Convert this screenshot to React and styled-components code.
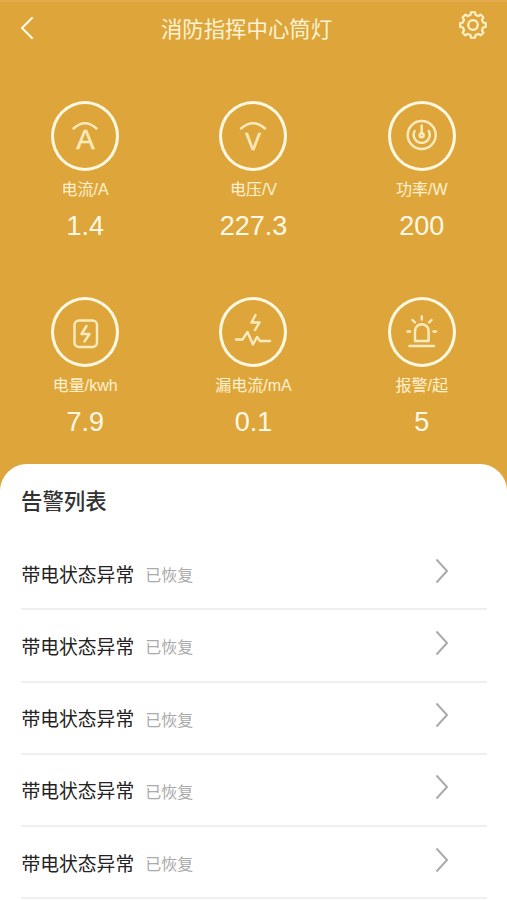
import React from 'react'
import styled, { createGlobalStyle } from 'styled-components';

const GlobalStyle = createGlobalStyle`
  * {
    box-sizing: border-box;
  }
  body {
    margin: 0;
    background: #fff;
    font-family: "Liberation Sans", "Noto Sans CJK SC", sans-serif;
  }
`;

const Page = styled.div`
  width: 100%;
  height: 900px;
  overflow: hidden;
  background: #dea63a;
  border-top: 2px solid #e3ab4c;
  display: flex;
  flex-direction: column;
`;

const Header = styled.header`
  height: 52px;
  padding: 0 19px 0 20px;
  display: flex;
  align-items: center;
  justify-content: space-between;
  flex-shrink: 0;
`;

const Title = styled.h1`
  margin: 3px 0 0;
  padding-right: 13px;
  font-size: 21.4px;
  font-weight: 400;
  line-height: 32px;
  color: #fff3d6;
`;

const BackIcon = styled.svg`
  width: 14px;
  height: 24px;
  margin-right: 14px;
`;

const GearIcon = styled.svg`
  width: 30px;
  height: 30px;
  margin-top: -6px;
`;

const Stats = styled.section`
  height: 410px;
  padding: 46.5px 1px 0;
  display: grid;
  grid-template-columns: repeat(3, 1fr);
  grid-auto-rows: 196px;
  flex-shrink: 0;
`;

const Stat = styled.div`
  display: flex;
  flex-direction: column;
  align-items: center;
`;

const Circle = styled.div`
  width: 68px;
  height: 70px;
  border: 3px solid #fff8e2;
  border-radius: 50%;
  display: flex;
  align-items: center;
  justify-content: center;
`;

const StatIcon = styled.svg`
  width: 40px;
  height: 40px;
  flex-shrink: 0;
  fill: none;
  stroke: #fcebbf;
  stroke-width: 2.4;
  stroke-linecap: round;
  stroke-linejoin: round;
  text {
    font-family: "Liberation Sans", sans-serif;
    fill: #fcebbf;
    stroke-width: 0.5;
    text-anchor: middle;
  }
`;

const StatLabel = styled.div`
  margin-top: 7.5px;
  font-size: 16px;
  line-height: 24px;
  color: #fff1d0;
`;

const StatValue = styled.div`
  margin-top: 8px;
  font-size: 27px;
  line-height: 32px;
  color: #fff8e6;
`;

const Panel = styled.main`
  flex: 1;
  padding: 22px 20px 0 21px;
  background: #fff;
  border-radius: 27px 27px 0 0;
`;

const PanelTitle = styled.h2`
  margin: 0 0 20px;
  font-size: 21.4px;
  font-weight: 500;
  line-height: 32px;
  color: #333;
`;

const Row = styled.div`
  height: 72.25px;
  padding: 5px 38px 0 0;
  border-bottom: 2px solid #efefef;
  display: flex;
  align-items: center;
`;

const RowName = styled.span`
  padding-left: 0.5px;
  font-size: 18.8px;
  line-height: 28px;
  color: #222;
`;

const RowStatus = styled.span`
  margin: 1px 0 0 11px;
  flex: 1;
  font-size: 16px;
  line-height: 24px;
  color: #aaa;
`;

const RowArrow = styled.svg`
  width: 14px;
  height: 26px;
  margin-top: -10px;
`;

// outline of an eight tooth gear around (15, 15)
const gearPath = () => {
  const points = [];
  for (let i = 0; i < 8; i++) {
    [[-14, 10.4], [-9, 12.9], [9, 12.9], [14, 10.4]].forEach(([offset, r]) => {
      const a = ((i * 45 + offset - 90) * Math.PI) / 180;
      points.push(`${(15 + r * Math.cos(a)).toFixed(2)} ${(15 + r * Math.sin(a)).toFixed(2)}`);
    });
  }
  return `M${points.join('L')}Z`;
};

const CurrentIcon = () => (
  <StatIcon viewBox="0 0 40 40">
    <path d="M8.5 12.5Q20 2 31.5 12.5" />
    <text x="20.3" y="32.8" fontSize="27.5">A</text>
  </StatIcon>
);

const VoltageIcon = () => (
  <StatIcon viewBox="0 0 40 40">
    <path d="M8 12.5Q20 2 32 12.5" />
    <text x="20" y="33.5" fontSize="23.5">V</text>
  </StatIcon>
);

const PowerIcon = () => (
  <StatIcon viewBox="0 0 40 40">
    <circle cx="19.7" cy="19" r="14" />
    <path d="M12.7 15A8 8 0 1 0 26.7 15" />
    <path d="M19.7 9.5V17" />
    <circle cx="19.7" cy="19.3" r="2" />
  </StatIcon>
);

const EnergyIcon = () => (
  <StatIcon viewBox="0 0 40 40">
    <rect x="9.5" y="8.5" width="22.5" height="26.5" rx="4.5" />
    <path d="M21.5 14L16.5 22H24.5L19.5 29.5" />
  </StatIcon>
);

const LeakIcon = () => (
  <StatIcon viewBox="0 0 40 40">
    <path d="M22.5 3L18.5 10.5H26.5L22 18" />
    <path d="M3 27.5H9.5L14.5 20L20 32.5L24 25L27 29H37" />
  </StatIcon>
);

const AlarmIcon = () => (
  <StatIcon viewBox="0 0 40 40">
    <path d="M13 29V19A6.8 6.8 0 0 1 26.6 19V29Z" />
    <path d="M7.5 34H32M19.8 4.5V7.5M10.5 8L13 10.5M29.5 8L27 10.5M5.5 19.5H8M31.5 19.5H34" />
  </StatIcon>
);

const stats = [
  { icon: CurrentIcon, label: '电流/A', value: '1.4' },
  { icon: VoltageIcon, label: '电压/V', value: '227.3' },
  { icon: PowerIcon, label: '功率/W', value: '200' },
  { icon: EnergyIcon, label: '电量/kwh', value: '7.9' },
  { icon: LeakIcon, label: '漏电流/mA', value: '0.1' },
  { icon: AlarmIcon, label: '报警/起', value: '5' },
];

const alarms = [1, 2, 3, 4, 5].map(id => ({ id, name: '带电状态异常', status: '已恢复' }));

export default function App() {
  return (
    <Page>
      <GlobalStyle />
      <Header>
        <BackIcon viewBox="0 0 14 24" fill="none" stroke="#fff8e2" strokeWidth="2.2" strokeLinecap="round" strokeLinejoin="round">
          <path d="M12 2L2 12L12 22" />
        </BackIcon>
        <Title>消防指挥中心筒灯</Title>
        <GearIcon viewBox="0 0 30 30" fill="none" stroke="#fff1cc" strokeWidth="2.2" strokeLinejoin="round">
          <path d={gearPath()} />
          <circle cx="15" cy="15" r="4.8" />
        </GearIcon>
      </Header>
      <Stats>
        {stats.map(({ icon: Icon, label, value }) => (
          <Stat key={label}>
            <Circle><Icon /></Circle>
            <StatLabel>{label}</StatLabel>
            <StatValue>{value}</StatValue>
          </Stat>
        ))}
      </Stats>
      <Panel>
        <PanelTitle>告警列表</PanelTitle>
        {alarms.map(alarm => (
          <Row key={alarm.id}>
            <RowName>{alarm.name}</RowName>
            <RowStatus>{alarm.status}</RowStatus>
            <RowArrow viewBox="0 0 14 26" fill="none" stroke="#aaa" strokeWidth="2">
              <path d="M1.5 1.5L12 13L1.5 24.5" />
            </RowArrow>
          </Row>
        ))}
      </Panel>
    </Page>
  );
}
